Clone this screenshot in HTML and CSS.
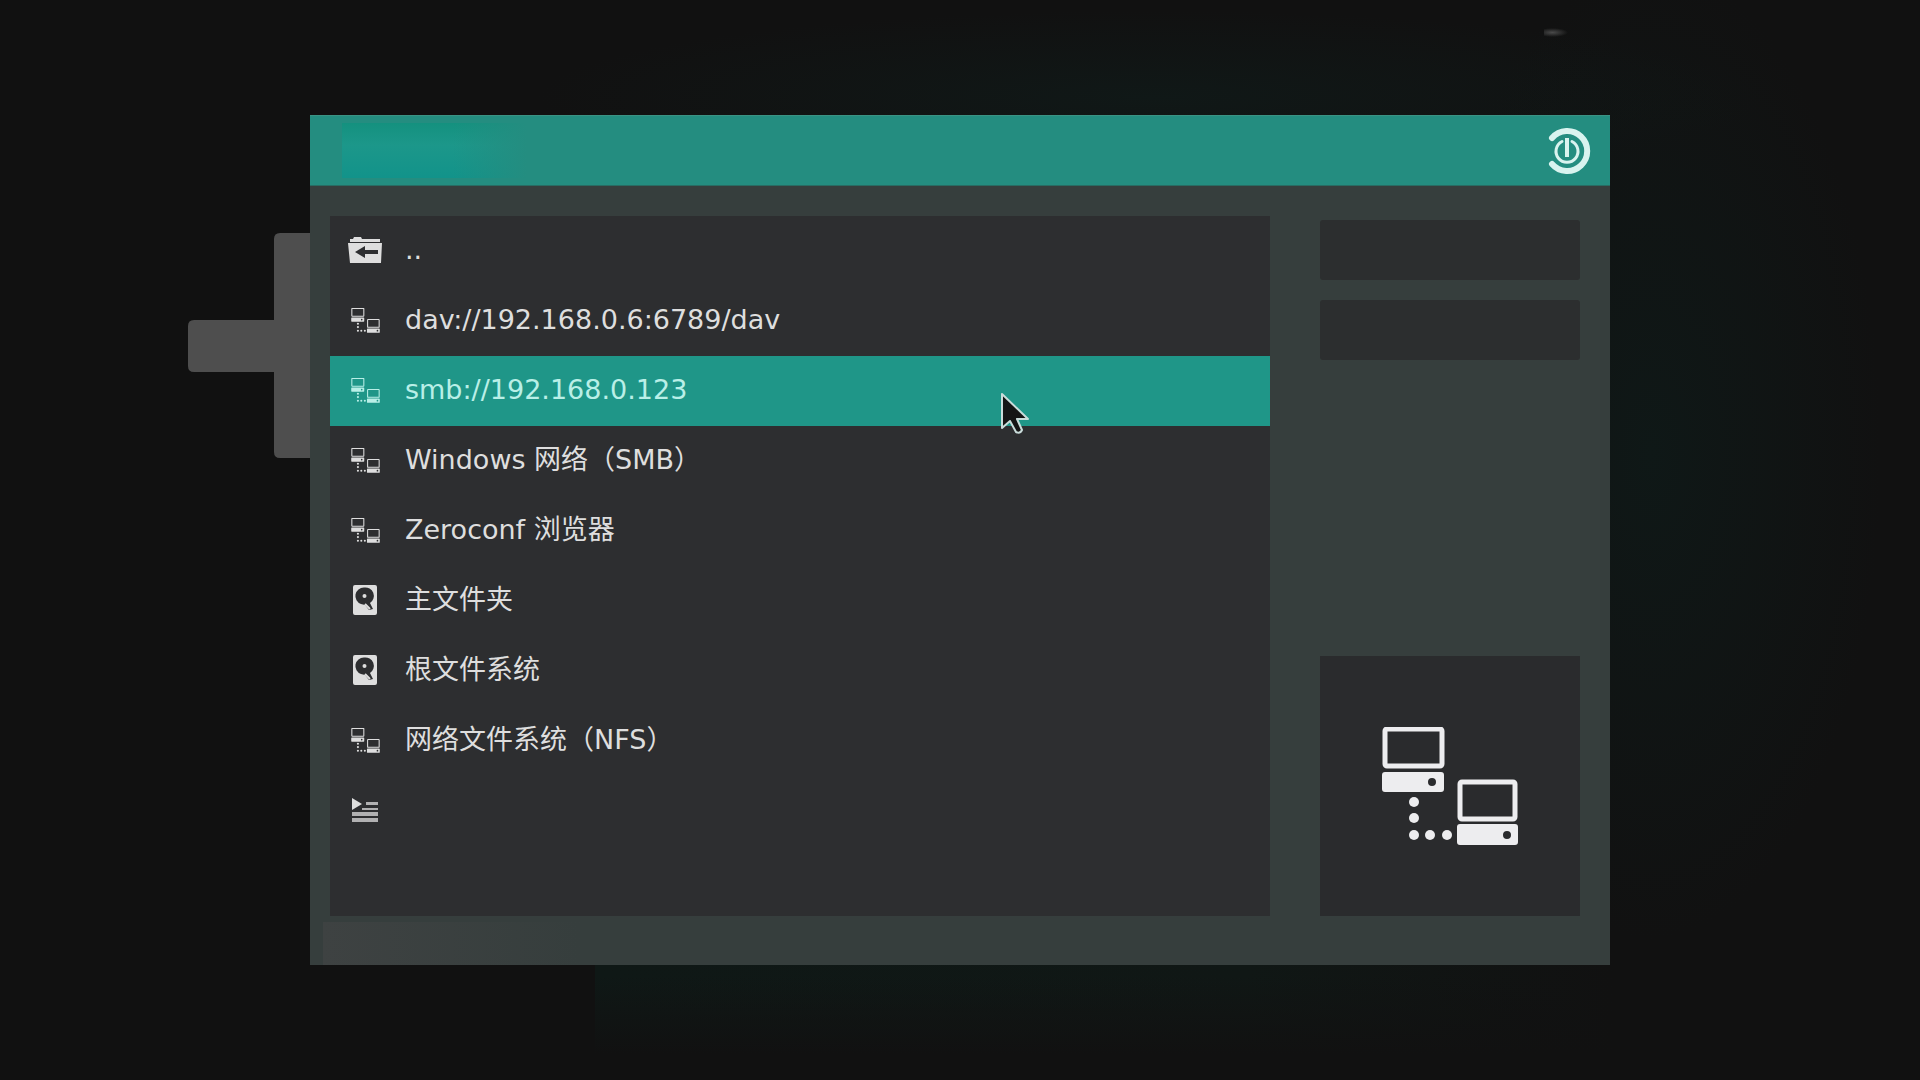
FILE: index.html
```html
<!DOCTYPE html>
<html lang="zh-CN">
<head>
    <meta charset="UTF-8">
    <meta name="viewport" content="width=device-width, initial-scale=1.0">
    <title>Kodi</title>
    <link rel="stylesheet" href="styles.css">
</head>
<body>

    <!-- Shared icons -->
    <svg class="icon-defs" aria-hidden="true">
        <symbol id="icon-network" viewBox="22 71 136 119">
            <g fill="none" stroke="currentColor" stroke-width="5">
                <rect x="25" y="73" width="57" height="37" rx="2"/>
                <rect x="100" y="126" width="55" height="37" rx="2"/>
            </g>
            <path fill="currentColor" fill-rule="evenodd" d="M25 116h56q3 0 3 3v14q0 3-3 3H25q-3 0-3-3v-14q0-3 3-3zM72 122a4 4 0 1 0 0 8a4 4 0 1 0 0-8z"/>
            <path fill="currentColor" fill-rule="evenodd" d="M100 168h55q3 0 3 3v15q0 3-3 3h-55q-3 0-3-3v-15q0-3 3-3zM147 175a4 4 0 1 0 0 8a4 4 0 1 0 0-8z"/>
            <g fill="currentColor">
                <circle cx="54" cy="146" r="5"/>
                <circle cx="54" cy="162" r="5"/>
                <circle cx="54" cy="179" r="5"/>
                <circle cx="70" cy="179" r="5"/>
                <circle cx="87" cy="179" r="5"/>
            </g>
        </symbol>
        <symbol id="icon-folder" viewBox="0 0 34 27">
            <path fill="currentColor" d="M2 5V2h3l1-2h7l1 2h18v3z"/>
            <path fill="currentColor" fill-rule="evenodd" d="M0 6h34l-1 20H2zM7 15l10-6v4h13v4H17v4z"/>
        </symbol>
        <symbol id="icon-disk" viewBox="0 0 26 32">
            <path fill="currentColor" fill-rule="evenodd" d="M3 1h20q2 0 2 2v26q0 2-2 2H3q-2 0-2-2V3q0-2 2-2zM12 3.500a8.500 8.500 0 0 0-3 16.500l4 1 4 5 4-1-3-6A8.500 8.500 0 0 0 12 3.500z"/>
            <circle cx="12.500" cy="12" r="2" fill="currentColor"/>
            <path d="M13 20l5 5" stroke="currentColor" stroke-width="2"/>
        </symbol>
        <symbol id="icon-playlist" viewBox="0 0 26 25">
            <path fill="currentColor" d="M0 0l10 6-10 6z"/>
            <path fill="currentColor" opacity=".75" d="M14 4h12v3H14zM10 10h16v2H10zM0 14h26v4H0zM0 20h26v4H0z"/>
        </symbol>
    </svg>

    <div class="backdrop" aria-hidden="true">
        <svg class="plus" viewBox="0 0 140 226">
            <path fill="#4e4e4e" d="M92 0h48v225H92q-6 0-6-6v-80H6q-6 0-6-6V93q0-6 6-6h80V6q0-6 6-6z"/>
        </svg>
        <span class="spark"></span>
    </div>

    <main class="dialog">
        <header class="dialog-header">
            <div class="title"></div>
            <button class="close" type="button" aria-label="关闭">
                <svg viewBox="0 0 50 50" width="50" height="50" fill="none" stroke="currentColor" stroke-linecap="round">
                    <path stroke-width="6" d="M10 12A20 20 0 1 1 10 38"/>
                    <path stroke-width="3" d="M20 15.500A11 11 0 1 0 30 15.500"/>
                    <path stroke-width="4" stroke-linecap="butt" d="M25 12v19"/>
                </svg>
            </button>
        </header>

        <div class="dialog-body">
            <ul class="list">
                <li><a href="#" class="row"><span class="icon"><svg width="34" height="27"><use href="#icon-folder"/></svg></span>..</a></li>
                <li><a href="#" class="row"><span class="icon"><svg width="29" height="25"><use href="#icon-network"/></svg></span>dav://192.168.0.6:6789/dav</a></li>
                <li>
                    <a href="#" class="row selected"><span class="icon"><svg width="29" height="25"><use href="#icon-network"/></svg></span>smb://192.168.0.123</a>
                    <svg class="cursor" viewBox="0 0 30 44" width="30" height="44" aria-hidden="true">
                        <path fill="#151515" stroke="#c9dcda" stroke-width="2" stroke-linejoin="round" d="M2 2v34l8-7 6 11q4 2 6-2l-5-11h11z"/>
                    </svg>
                </li>
                <li><a href="#" class="row"><span class="icon"><svg width="29" height="25"><use href="#icon-network"/></svg></span>Windows 网络（SMB）</a></li>
                <li><a href="#" class="row"><span class="icon"><svg width="29" height="25"><use href="#icon-network"/></svg></span>Zeroconf 浏览器</a></li>
                <li><a href="#" class="row"><span class="icon"><svg width="26" height="32"><use href="#icon-disk"/></svg></span>主文件夹</a></li>
                <li><a href="#" class="row"><span class="icon"><svg width="26" height="32"><use href="#icon-disk"/></svg></span>根文件系统</a></li>
                <li><a href="#" class="row"><span class="icon"><svg width="29" height="25"><use href="#icon-network"/></svg></span>网络文件系统（NFS）</a></li>
                <li><a href="#" class="row" aria-label="播放列表"><span class="icon"><svg width="26" height="25"><use href="#icon-playlist"/></svg></span></a></li>
            </ul>

            <aside class="side">
                <button class="action" type="button" aria-label="确定"></button>
                <button class="action" type="button" aria-label="取消"></button>
                <div class="preview">
                    <svg width="136" height="119"><use href="#icon-network"/></svg>
                </div>
            </aside>
        </div>

        <footer class="dialog-footer"><div class="path"></div></footer>
    </main>

</body>
</html>
```

FILE: styles.css
```css
* {
    box-sizing: border-box;
}

body {
    margin: 0;
    min-height: 100vh;
    display: flex;
    align-items: center;
    justify-content: center;
    position: relative;
    background:
        radial-gradient(ellipse 12% 45% at 86% 42%, #0f1817, transparent),
        radial-gradient(ellipse 32% 8% at 60% 9%, #101817, transparent),
        linear-gradient(transparent 20%, #111 80%) bottom / 100% 130px no-repeat,
        linear-gradient(to right, transparent 31%, #0f1816 31%, #101715 65%, transparent 84%) bottom / 100% 130px no-repeat,
        #111;
    color: #dedede;
    font-family: "DejaVu Sans", "Noto Sans CJK SC", sans-serif;
    font-size: 27px;
    line-height: 32px;
}

.icon-defs {
    position: absolute;
    width: 0;
    height: 0;
}

/* Shapes behind the dialog */
.backdrop {
    position: absolute;
    inset: 0;
    overflow: hidden;
}

.plus {
    position: absolute;
    top: 233px;
    left: calc(50% - 772px);
    width: 140px;
    height: 226px;
}

.spark {
    position: absolute;
    top: 28px;
    left: calc(50% + 584px);
    width: 24px;
    height: 9px;
    background: radial-gradient(ellipse at 35% 50%, #4a4a4a, transparent 70%);
}

.dialog {
    position: relative;
    width: 94%;
    max-width: 1300px;
    background: #363e3d;
}

.dialog-header {
    display: flex;
    align-items: center;
    justify-content: space-between;
    height: 71px;
    padding: 0 18px 0 32px;
    background: #248d80;
    border-top: 1px solid #3b9384;
    border-bottom: 1px solid #286c63;
}

.title {
    width: 185px;
    height: 55px;
    background: linear-gradient(to right, transparent 60%, #248d80), linear-gradient(#14917f, #1c978a 40%, #12938a);
}

.close {
    display: flex;
    padding: 0;
    border: 0;
    background: none;
    color: #d9f3ef;
    cursor: pointer;
}

.dialog-body {
    display: flex;
    gap: 50px;
    padding: 30px 30px 0 20px;
}

.list {
    flex: 1;
    min-height: 700px;
    margin: 0;
    padding: 0;
    list-style: none;
    background: #2d2e30;
}

.list li {
    position: relative;
}

.row {
    display: flex;
    align-items: center;
    gap: 22px;
    height: 70px;
    padding: 0 17px 2px;
    color: inherit;
    text-decoration: none;
    white-space: nowrap;
}

.row.selected {
    background: #1f9688;
    color: #b9efe7;
}

.icon {
    display: flex;
    justify-content: center;
    flex: none;
    width: 36px;
}

.cursor {
    position: absolute;
    top: 36px;
    left: calc(100% - 270px);
    z-index: 1;
}

.side {
    display: flex;
    flex-direction: column;
    gap: 20px;
    width: 260px;
    padding-top: 4px;
}

.action {
    height: 60px;
    border: 0;
    border-radius: 3px;
    background: #2c2e2f;
    cursor: pointer;
}

.preview {
    display: flex;
    align-items: center;
    justify-content: center;
    height: 260px;
    margin-top: auto;
    background: #2a2b2d;
    color: #ededef;
}

.dialog-footer {
    height: 49px;
    padding: 6px 13px 0;
}

.path {
    width: 257px;
    height: 43px;
    background: linear-gradient(to right, #3e4242, #363e3d);
}
```
